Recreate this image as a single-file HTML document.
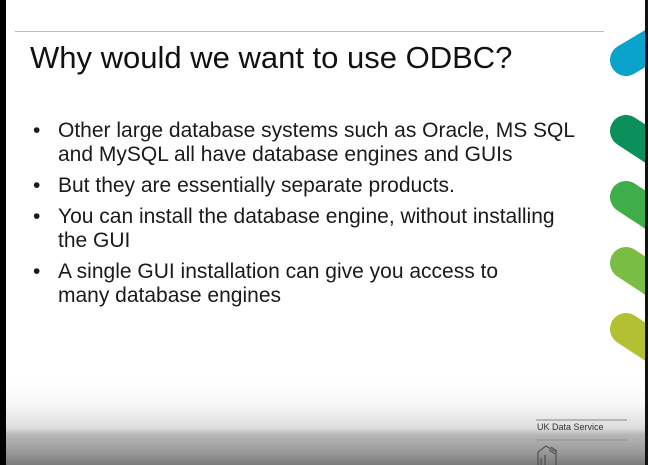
<!DOCTYPE html><html><head><style>
body{margin:0;width:648px;height:465px;overflow:hidden;background:#fff;position:relative;font-family:"Liberation Sans",sans-serif;}
.g{position:absolute;left:0;top:380px;width:648px;height:85px;background:linear-gradient(#fff 0%,#f6f6f6 30%,#dedede 56%,#cdcdcd 60%,#b8b8b8 64%,#999 85%,#7a7a7a 100%);}
.ln{position:absolute;left:0;top:428px;width:648px;height:2px;background:#d8d8d8;opacity:.8}
h1{position:absolute;left:30px;top:40px;margin:0;font-weight:normal;font-size:31px;color:#111;}
ul{position:absolute;left:30px;top:119px;margin:0;padding:0;list-style:none;font-size:21px;line-height:24px;color:#1a1a1a;white-space:nowrap}
li{position:relative;padding-left:28px;margin-bottom:7px;width:560px}
li:before{content:"•";position:absolute;left:3px;}
</style></head><body>
<div class="g"></div><div class="ln"></div>
<div style="position:absolute;left:15px;top:31px;width:589px;height:1px;background:#bbb"></div>
<h1>Why would we want to use ODBC?</h1>
<ul>
<li>Other large database systems such as Oracle, MS SQL<br>and MySQL all have database engines and GUIs</li>
<li>But they are essentially separate products.</li>
<li>You can install the database engine, without installing<br>the GUI</li>
<li>A single GUI installation can give you access to<br>many database engines</li>
</ul>
<svg style="position:absolute;left:0;top:0" width="648" height="465">
<g stroke-linecap="round" stroke-width="32">
<line x1="626" y1="60" x2="690" y2="22" stroke="#0aa3cc"/>
<line x1="626" y1="131" x2="690" y2="173" stroke="#0b8f5b"/>
<line x1="626" y1="197" x2="690" y2="239" stroke="#3fae4a"/>
<line x1="626" y1="263" x2="690" y2="305" stroke="#7abd44"/>
<line x1="626" y1="329" x2="690" y2="371" stroke="#b3c032"/>
</g>
<rect x="0" y="0" width="6" height="465" fill="#000"/>
<rect x="645" y="0" width="3" height="465" fill="#111"/>
<line x1="536" y1="420" x2="627" y2="420" stroke="#666" stroke-width="0.8"/>
<line x1="536" y1="440" x2="627" y2="440" stroke="#888" stroke-width="0.8"/>
<text x="537" y="430" font-size="9" fill="#333" font-family="Liberation Sans">UK Data Service</text>
<g stroke="#444" stroke-width="1" fill="none"><path d="M538 465V452l8-6 10 6v13M541 458v7M545 455v10M549 450l6 4M551 447l6 4"/></g>
</svg>
</body></html>
